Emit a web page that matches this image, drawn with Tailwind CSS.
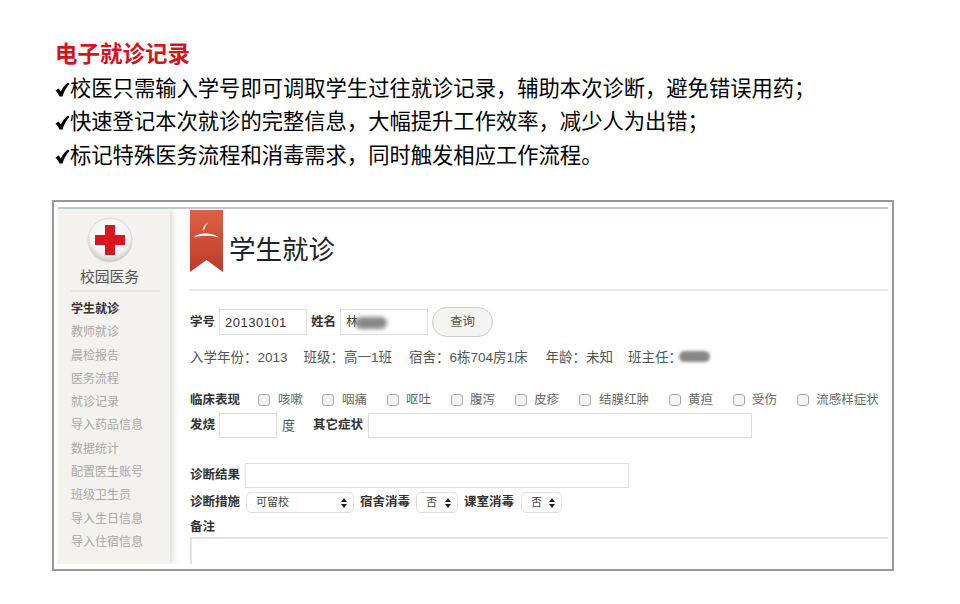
<!DOCTYPE html>
<html lang="zh-CN">
<head>
  <meta charset="UTF-8">
  <title>电子就诊记录</title>
  <script src="https://cdn.jsdelivr.net/npm/@tailwindcss/browser@4"></script>
</head>
<body class="bg-white font-['Liberation_Sans','Noto_Sans_CJK_SC',sans-serif]">
<div class="w-[960px] h-[604px] overflow-hidden pt-[39px]">
  <!-- intro text -->
  <div class="pl-[55px] text-black">
    <h1 class="h-[31px] text-[22.5px] leading-[31px] font-bold text-[#d3141f]">电子就诊记录</h1>
    <div class="mt-[3px] h-[100px] text-[21.3px] leading-[33.3px] whitespace-nowrap">
      <p class="flex items-center"><svg class="shrink-0" width="15" height="15" viewBox="0 0 15 15"><path d="M0.5 8.5l3.2-2 2 3C7.500 6 10 2.500 13 0.500l1.500 1.500C11.500 5 9 9.500 7.500 14.500H4.500C3.500 12 2 10 0.500 8.500z" fill="#000"/></svg>校医只需输入学号即可调取学生过往就诊记录，辅助本次诊断，避免错误用药；</p>
      <p class="flex items-center"><svg class="shrink-0" width="15" height="15" viewBox="0 0 15 15"><path d="M0.5 8.5l3.2-2 2 3C7.500 6 10 2.500 13 0.500l1.500 1.500C11.500 5 9 9.500 7.500 14.500H4.500C3.500 12 2 10 0.500 8.500z" fill="#000"/></svg>快速登记本次就诊的完整信息，大幅提升工作效率，减少人为出错；</p>
      <p class="flex items-center"><svg class="shrink-0" width="15" height="15" viewBox="0 0 15 15"><path d="M0.5 8.5l3.2-2 2 3C7.500 6 10 2.500 13 0.500l1.500 1.500C11.500 5 9 9.500 7.500 14.500H4.500C3.500 12 2 10 0.500 8.500z" fill="#000"/></svg>标记特殊医务流程和消毒需求，同时触发相应工作流程。</p>
    </div>
  </div>

  <!-- screenshot frame -->
  <div class="ml-[52px] mt-[27px] w-[842px] h-[371px] border-2 border-[#999] bg-white pt-[5px] pl-[4px] pr-[4px] pb-[5px]">
    <div class="h-full border-t-2 border-[#b9c9cc] flex overflow-hidden">
      <!-- sidebar -->
      <aside class="w-[112px] shrink-0 bg-[#f4f2ee] shadow-[3px_0_6px_rgba(0,0,0,0.14)] pl-[13px] pr-[10px]">
        <div class="flex flex-col items-center border-b-2 border-[#e6e4df] h-[83px] pr-[12px]">
          <svg class="mt-[8px] shrink-0" width="46" height="46" viewBox="0 0 46 46">
            <defs>
              <radialGradient id="disc" cx="50%" cy="40%" r="60%">
                <stop offset="0%" stop-color="#ffffff"/>
                <stop offset="75%" stop-color="#f2f2f2"/>
                <stop offset="100%" stop-color="#c4c4c4"/>
              </radialGradient>
            </defs>
            <circle cx="23" cy="23" r="22" fill="url(#disc)" stroke="#d0d0d0" stroke-width="0.8"/>
            <path d="M18 8h10v10h10v10H28v10H18V28H8V18h10z" fill="#d9151f"/>
          </svg>
          <span class="mt-[4px] text-[14.8px] leading-[20px] text-[#555] whitespace-nowrap">校园医务</span>
        </div>
        <ul class="mt-[6px] text-[12px] leading-[23.3px] text-[#a8a8a4]">
          <li class="font-bold text-[#333]">学生就诊</li>
          <li>教师就诊</li>
          <li>晨检报告</li>
          <li>医务流程</li>
          <li>就诊记录</li>
          <li>导入药品信息</li>
          <li>数据统计</li>
          <li>配置医生账号</li>
          <li>班级卫生员</li>
          <li>导入生日信息</li>
          <li>导入住宿信息</li>
        </ul>
      </aside>

      <!-- main panel -->
      <main class="flex-1 pl-[20px] text-[12.5px] text-[#444]">
        <div class="h-[82px] border-b-2 border-[#e8e8e8] flex items-start">
          <svg class="shrink-0 mt-[1px]" width="33" height="62" viewBox="0 0 33 62">
            <defs>
              <linearGradient id="ribbon" x1="0" y1="0" x2="0" y2="1">
                <stop offset="0%" stop-color="#dc6243"/>
                <stop offset="100%" stop-color="#bf3a2b"/>
              </linearGradient>
            </defs>
            <path d="M0 0h33v62L16.5 50 0 62z" fill="url(#ribbon)"/>
            <path d="M18.500 12C15 14 13 17 12.500 21c1.500-1 2.500-3 3-5 1-1.500 2-3 3-4z" fill="#fff"/>
            <path d="M4 27.500C8 22.500 22 22 29 27.500 22 25 10 25 4 27.500z" fill="#fff"/>
          </svg>
          <h2 class="ml-[6px] mt-[24px] text-[26.5px] leading-[34px] text-[#222] whitespace-nowrap">学生就诊</h2>
        </div>

        <div class="mt-[16px] flex items-center h-[30px]">
          <b class="text-[#333] w-[29px]">学号</b>
          <input value="20130101" class="w-[88px] h-[26px] border border-[#ddd] px-[5px] text-[13px] tracking-[0.5px] text-[#333] outline-none">
          <b class="text-[#333] ml-[4px] w-[29px]">姓名</b>
          <div class="relative w-[88px] h-[26px] border border-[#ddd] px-[5px] text-[12px] leading-[24px] text-[#333]">林
            <span class="absolute left-[14px] top-[7px] w-[32px] h-[12px] rounded-full bg-[#888] blur-[2px]"></span>
          </div>
          <button class="ml-[4px] w-[61px] h-[30px] rounded-full border border-[#ccc] bg-[#f4f4f2] text-[12.5px] text-[#555]">查询</button>
        </div>

        <p class="mt-[11px] h-[20px] leading-[20px] text-[13.5px] text-[#555] flex whitespace-pre">入学年份：2013<span class="ml-[16px]">班级：高一1班</span><span class="ml-[17px]">宿舍：6栋704房1床</span><span class="ml-[18px]">年龄：未知</span><span class="ml-[15px]">班主任：</span><span class="ml-[-3px] w-[31px] h-[11px] mt-[3px] rounded-full bg-[#888] blur-[1.5px]"></span></p>

        <div class="mt-[22px] flex items-center h-[20px] text-[#666] whitespace-nowrap">
          <b class="text-[#333] w-[68px]">临床表现</b>
          <div class="flex items-center gap-[8px]"><span class="w-[12px] h-[12px] rounded-[3px] border border-[#aaa] bg-[#f3f3f3]"></span>咳嗽</div>
          <div class="ml-[19px] flex items-center gap-[8px]"><span class="w-[12px] h-[12px] rounded-[3px] border border-[#aaa] bg-[#f3f3f3]"></span>咽痛</div>
          <div class="ml-[20px] flex items-center gap-[7px]"><span class="w-[12px] h-[12px] rounded-[3px] border border-[#aaa] bg-[#f3f3f3]"></span>呕吐</div>
          <div class="ml-[20px] flex items-center gap-[7px]"><span class="w-[12px] h-[12px] rounded-[3px] border border-[#aaa] bg-[#f3f3f3]"></span>腹泻</div>
          <div class="ml-[20px] flex items-center gap-[7px]"><span class="w-[12px] h-[12px] rounded-[3px] border border-[#aaa] bg-[#f3f3f3]"></span>皮疹</div>
          <div class="ml-[20px] flex items-center gap-[8px]"><span class="w-[12px] h-[12px] rounded-[3px] border border-[#aaa] bg-[#f3f3f3]"></span>结膜红肿</div>
          <div class="ml-[20px] flex items-center gap-[7px]"><span class="w-[12px] h-[12px] rounded-[3px] border border-[#aaa] bg-[#f3f3f3]"></span>黄疸</div>
          <div class="ml-[20px] flex items-center gap-[7px]"><span class="w-[12px] h-[12px] rounded-[3px] border border-[#aaa] bg-[#f3f3f3]"></span>受伤</div>
          <div class="ml-[20px] flex items-center gap-[7px]"><span class="w-[12px] h-[12px] rounded-[3px] border border-[#aaa] bg-[#f3f3f3]"></span>流感样症状</div>
        </div>

        <div class="mt-[3px] flex items-center h-[25px]">
          <b class="text-[#333] w-[29px]">发烧</b>
          <div class="w-[58px] h-[25px] border border-[#ddd]"></div>
          <span class="ml-[5px] w-[31px] text-[13px] text-[#555]">度</span>
          <b class="text-[#333] w-[55px] whitespace-nowrap">其它症状</b>
          <div class="w-[384px] h-[25px] border border-[#ddd]"></div>
        </div>

        <div class="mt-[25px] flex items-center h-[25px]">
          <b class="text-[#333] w-[55px] whitespace-nowrap">诊断结果</b>
          <div class="w-[384px] h-[25px] border border-[#ddd]"></div>
        </div>

        <div class="mt-[4px] flex items-center h-[21px] text-[11px] text-[#444] whitespace-nowrap">
          <b class="text-[12.5px] text-[#333] w-[56px]">诊断措施</b>
          <div class="w-[108px] h-[21px] border border-[#ddd] rounded-[5px] pl-[9px] pr-[6px] flex items-center justify-between">可留校
            <svg width="6" height="10" viewBox="0 0 6 10"><path d="M3 0l3 4H0zM3 10L0 6h6z" fill="#222"/></svg>
          </div>
          <b class="ml-[6px] text-[12.5px] text-[#333] w-[56px]">宿舍消毒</b>
          <div class="w-[42px] h-[21px] border border-[#ddd] rounded-[5px] pl-[9px] pr-[6px] flex items-center justify-between">否
            <svg width="6" height="10" viewBox="0 0 6 10"><path d="M3 0l3 4H0zM3 10L0 6h6z" fill="#222"/></svg>
          </div>
          <b class="ml-[6px] text-[12.5px] text-[#333] w-[57px]">课室消毒</b>
          <div class="w-[41px] h-[21px] border border-[#ddd] rounded-[5px] pl-[9px] pr-[6px] flex items-center justify-between">否
            <svg width="6" height="10" viewBox="0 0 6 10"><path d="M3 0l3 4H0zM3 10L0 6h6z" fill="#222"/></svg>
          </div>
        </div>

        <b class="mt-[5px] block h-[19px] leading-[18px] text-[#333]">备注</b>
        <div class="h-[60px] border-l-2 border-t-2 border-[#e4e4e4]"></div>
      </main>
    </div>
  </div>
</div>
</body>
</html>
